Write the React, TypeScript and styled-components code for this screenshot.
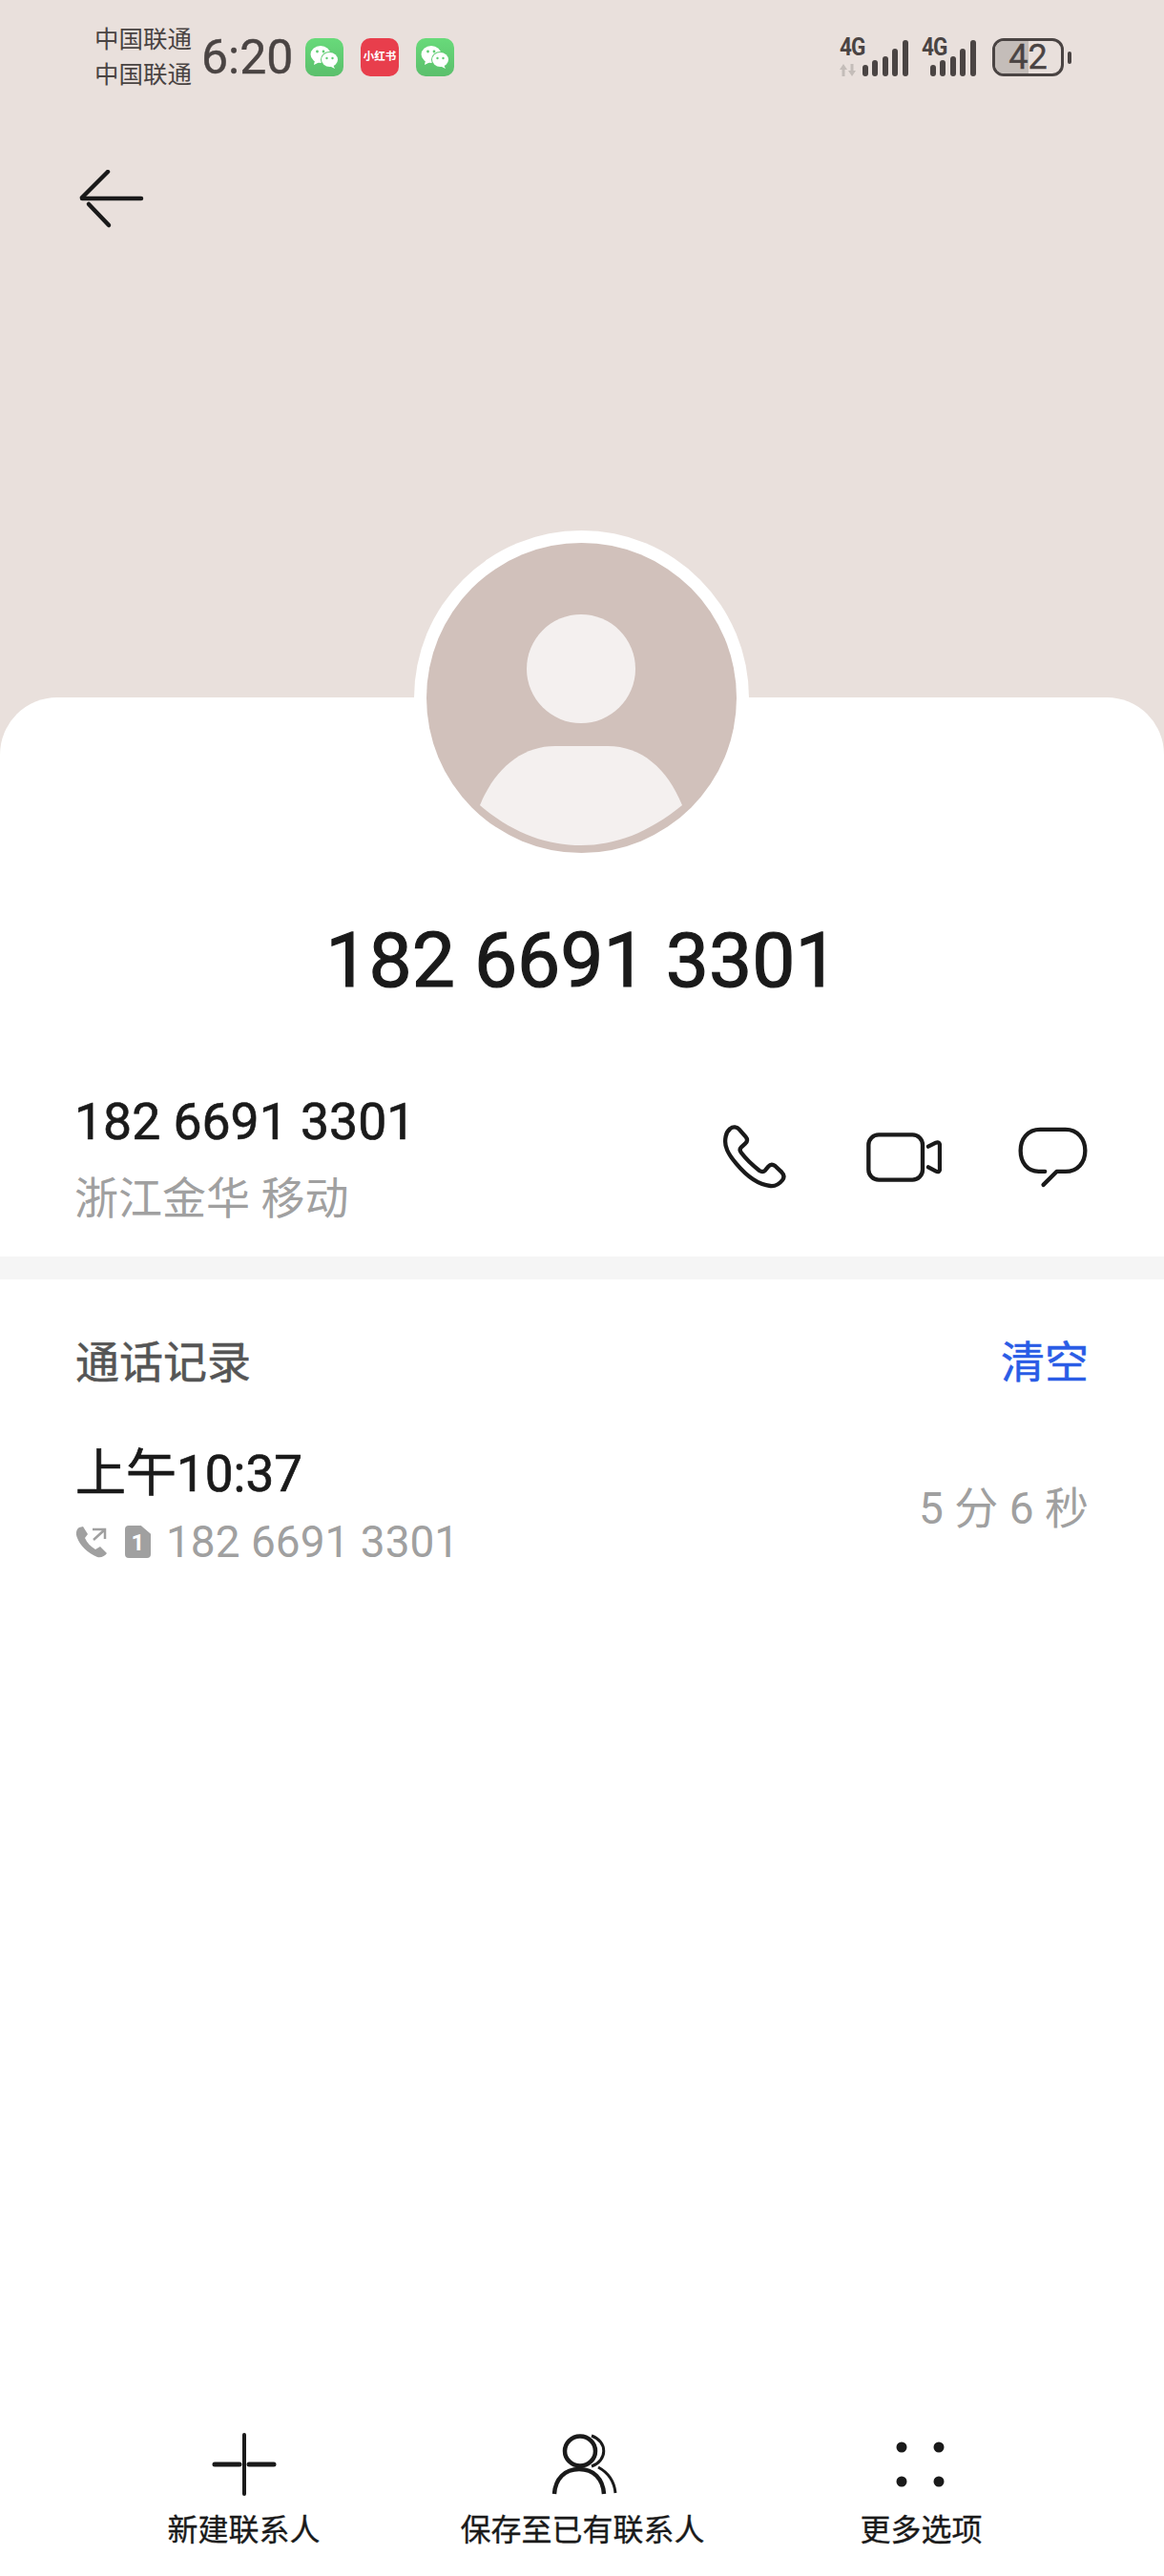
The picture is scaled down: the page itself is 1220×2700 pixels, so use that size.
import styled, { createGlobalStyle } from 'styled-components';

const GlobalStyle = createGlobalStyle`
  html, body {
    margin: 0;
    padding: 0;
    background: #ffffff;
  }
  * {
    box-sizing: border-box;
  }
`;

const fontStack = `Roboto, "Noto Sans CJK SC", sans-serif`;

const navItems = [
  { label: '新建联系人', icon: 'plus' },
  { label: '保存至已有联系人', icon: 'person' },
  { label: '更多选项', icon: 'dots' },
];

const Page = styled.div`
  width: 1220px;
  height: 2700px;
  display: flex;
  flex-direction: column;
  overflow: hidden;
  font-family: ${fontStack};
  color: #1a1a1a;
`;

const Hero = styled.div`
  height: 791px;
  flex-shrink: 0;
  background: #e9e0dc;
`;

const StatusBar = styled.div`
  display: flex;
  align-items: center;
  height: 80px;
  padding: 40px 0 0 99px;
  color: #4a4443;
`;

const Carriers = styled.div`
  display: flex;
  flex-direction: column;
  font-size: 25.5px;
  line-height: 37px;
  width: 112px;
`;

const Clock = styled.div`
  font-size: 50px;
  line-height: 60px;
  width: 109px;
  -webkit-text-stroke: 0.4px #4a4443;
`;

const AppIcons = styled.div`
  display: flex;
  gap: 18px;
`;

const AppIcon = styled.div<{ $red?: boolean }>`
  width: 40px;
  height: 40px;
  border-radius: 10px;
  display: flex;
  align-items: center;
  justify-content: center;
  background: ${(p) => (p.$red ? '#e83e4c' : 'linear-gradient(#68da7a, #5bbf6c)')};
  color: #ffffff;
  font-size: 11.5px;
  font-weight: 700;
  line-height: 1;
  white-space: nowrap;
`;

const StatusRight = styled.div`
  display: flex;
  align-items: center;
  margin-left: auto;
  padding-right: 97px;
`;

const Signal = styled.div<{ $w: number; $gap?: number }>`
  position: relative;
  width: ${(p) => p.$w}px;
  height: 40px;
  margin-left: ${(p) => p.$gap ?? 0}px;
  display: flex;
  align-items: flex-end;
  justify-content: flex-end;
  gap: 4.6px;
`;

const Bar = styled.div<{ $h: number }>`
  width: 6px;
  height: ${(p) => p.$h}px;
  border-radius: 3px;
  background: #4a4443;
`;

const NetLabel = styled.span`
  position: absolute;
  left: 0;
  top: 0;
  font-size: 25px;
  line-height: 20px;
  font-weight: 700;
  letter-spacing: -1px;
  transform: scaleX(0.9);
  transform-origin: left;
`;

const Arrows = styled.svg`
  position: absolute;
  left: 0;
  bottom: 0;
`;

const Battery = styled.div`
  position: relative;
  width: 75px;
  height: 40px;
  margin-left: 17px;
  border: 3px solid #4a4443;
  border-radius: 12px;
  display: flex;
  align-items: center;
  justify-content: center;
  overflow: hidden;
  font-size: 36px;
  line-height: 1;
`;

const BatteryFill = styled.div`
  position: absolute;
  left: 0;
  top: 0;
  bottom: 0;
  width: 50%;
  background: #c4bdb9;
`;

const BatteryText = styled.span`
  position: relative;
  -webkit-text-stroke: 0.4px #4a4443;
`;

const BatteryNub = styled.div`
  width: 4px;
  height: 13px;
  margin-left: 4px;
  border-radius: 2px;
  background: #4a4443;
`;

const BackButton = styled.div`
  margin: 98px 0 0 80px;
  width: 72px;
  height: 64px;
`;

const Card = styled.div`
  flex: 1;
  display: flex;
  flex-direction: column;
  margin-top: -60px;
  position: relative;
  background: #ffffff;
  border-radius: 60px 60px 0 0;
`;

const AvatarRing = styled.div`
  width: 351px;
  height: 351px;
  flex-shrink: 0;
  margin: -175px 0 0 434px;
  padding: 13px;
  border-radius: 50%;
  background: #ffffff;
`;

const AvatarCircle = styled.svg`
  display: block;
  width: 325px;
  height: 325px;
`;

const Title = styled.div`
  margin-top: 55px;
  font-size: 80.5px;
  line-height: 90px;
  font-weight: 400;
  -webkit-text-stroke: 1.2px #1a1a1a;
  text-align: center;
`;

const ContactRow = styled.div`
  display: flex;
  align-items: center;
  justify-content: space-between;
  margin-top: 89px;
  padding: 0 80px 26px 78px;
`;

const ContactInfo = styled.div`
  display: flex;
  flex-direction: column;
  gap: 10px;
`;

const ContactNumber = styled.div`
  font-size: 53.5px;
  line-height: 70px;
  font-weight: 400;
  -webkit-text-stroke: 0.7px #1a1a1a;
`;

const Muted = styled.div`
  font-size: 46px;
  line-height: 70px;
  color: #a0a0a0;
`;

const ContactActions = styled.div`
  display: flex;
  align-items: center;
  gap: 80px;
  margin-bottom: 6px;
`;

const Divider = styled.div`
  height: 24px;
  background: #f5f5f5;
`;

const SectionHead = styled.div`
  display: flex;
  align-items: center;
  justify-content: space-between;
  padding: 57px 79px 0;
  font-size: 46px;
  line-height: 60px;
  color: #555555;
  -webkit-text-stroke: 0.5px #555555;
`;

const ClearLink = styled.span`
  color: #2a5ce6;
  -webkit-text-stroke: 0.5px #2a5ce6;
`;

const CallRow = styled.div`
  display: flex;
  align-items: center;
  justify-content: space-between;
  padding: 55px 79px 0;
`;

const CallInfo = styled.div`
  display: flex;
  flex-direction: column;
  gap: 14px;
`;

const CallTime = styled.div`
  font-size: 53px;
  line-height: 64px;
  font-weight: 400;
  -webkit-text-stroke: 0.7px #1a1a1a;
`;

const CallMeta = styled.div`
  display: flex;
  align-items: center;
  height: 50px;
  font-size: 46px;
  color: #a0a0a0;
`;

const CallIcon = styled.svg`
  margin-right: 18px;
`;

const SimIcon = styled.div`
  width: 27px;
  height: 34px;
  margin-right: 16px;
  border-radius: 4px;
  background: #a0a0a0;
  clip-path: polygon(0 0, 62% 0, 100% 26%, 100% 100%, 0 100%);
  color: #ffffff;
  font-size: 24px;
  font-weight: 700;
  line-height: 36px;
  text-align: center;
`;

const Duration = styled.div`
  font-size: 46px;
  color: #a0a0a0;
`;

const BottomNav = styled.div`
  display: grid;
  grid-template-columns: repeat(3, 355px);
  margin-top: auto;
  padding: 0 0 26px 78px;
`;

const NavItem = styled.div`
  display: flex;
  flex-direction: column;
  align-items: center;
  gap: 12px;
`;

const NavLabel = styled.div`
  font-size: 32px;
  line-height: 44px;
  white-space: nowrap;
  -webkit-text-stroke: 0.3px #1a1a1a;
`;

const WeChatGlyph = () => (
  <svg width="30" height="26" viewBox="0 0 30 26">
    <ellipse cx="11" cy="10" rx="10.5" ry="9" fill="#fff" />
    <path d="M5 16 L4 21 L10 18 Z" fill="#fff" />
    <ellipse cx="20.5" cy="15.5" rx="9.5" ry="8.5" fill="#62cd74" />
    <ellipse cx="20.5" cy="15.5" rx="8.5" ry="7.5" fill="#fff" />
    <path d="M24 21 L26 25 L20 22 Z" fill="#fff" />
    <circle cx="7.5" cy="7" r="1.4" fill="#62cd74" />
    <circle cx="14" cy="7" r="1.4" fill="#62cd74" />
    <circle cx="17.5" cy="14" r="1.2" fill="#62cd74" />
    <circle cx="23.5" cy="14" r="1.2" fill="#62cd74" />
  </svg>
);

const SignalBars = () => (
  <>
    <Bar $h={12} />
    <Bar $h={17} />
    <Bar $h={21} />
    <Bar $h={29} />
    <Bar $h={38} />
  </>
);

const NavIcon = ({ icon }: { icon: string }) => {
  if (icon === 'plus') {
    return (
      <svg width="70" height="70" viewBox="0 0 70 70" fill="none" stroke="#1a1a1a" strokeLinecap="round">
        <path d="M35 4 V66" strokeWidth="4" />
        <path d="M4 35 H30 M40 35 H66" strokeWidth="5" />
      </svg>
    );
  }
  if (icon === 'person') {
    return (
      <svg width="85" height="70" viewBox="0 0 85 70" fill="none" stroke="#1a1a1a" strokeWidth="4.5">
        <ellipse cx="40" cy="21" rx="16" ry="15.5" />
        <path d="M13 66 C14 50 24 40 39 40 C54 40 64 50 65 66" />
        <path d="M52 5 C69 11 69 31 52 37" strokeWidth="3" />
        <path d="M59 38 C70 44 76 54 77 65" strokeWidth="3" />
      </svg>
    );
  }
  return (
    <svg width="70" height="70" viewBox="0 0 70 70" fill="#1a1a1a">
      <circle cx="14" cy="17" r="5.5" />
      <circle cx="53" cy="17" r="5.5" />
      <circle cx="14" cy="53" r="5.5" />
      <circle cx="53" cy="53" r="5.5" />
    </svg>
  );
};

export default function App() {
  return (
    <>
      <GlobalStyle />
      <Page>
        <Hero>
          <StatusBar>
            <Carriers>
              <span>中国联通</span>
              <span>中国联通</span>
            </Carriers>
            <Clock>6:20</Clock>
            <AppIcons>
              <AppIcon>
                <WeChatGlyph />
              </AppIcon>
              <AppIcon $red>小红书</AppIcon>
              <AppIcon>
                <WeChatGlyph />
              </AppIcon>
            </AppIcons>
            <StatusRight>
              <Signal $w={72}>
                <NetLabel>4G</NetLabel>
                <Arrows width="18" height="13" viewBox="0 0 18 13" fill="#c4bdb9">
                  <path d="M4 0 L8 6 H5.5 V13 H2.5 V6 H0 Z" />
                  <path d="M13 13 L9 7 H11.5 V0 H14.5 V7 H17 Z" />
                </Arrows>
                <SignalBars />
              </Signal>
              <Signal $w={57} $gap={14}>
                <NetLabel>4G</NetLabel>
                <SignalBars />
              </Signal>
              <Battery>
                <BatteryFill />
                <BatteryText>42</BatteryText>
              </Battery>
              <BatteryNub />
            </StatusRight>
          </StatusBar>
          <BackButton>
            <svg width="72" height="64" viewBox="0 0 72 64" fill="none" stroke="#1a1a1a" strokeWidth="4.5" strokeLinecap="round">
              <path d="M6 30 H68" />
              <path d="M6 29 L33 2" />
              <path d="M13 36 L34 58" />
            </svg>
          </BackButton>
        </Hero>
        <Card>
          <AvatarRing>
            <AvatarCircle viewBox="0 0 325 325">
              <circle cx="162.5" cy="162.5" r="162.5" fill="#d1c1bb" />
              <circle cx="162" cy="132" r="57" fill="#f4f0ef" />
              <path
                d="M56 275 C72 236 100 213 135 213 H190 C225 213 252 236 268 275 C232 304 198 317 162 317 C126 317 90 304 56 275 Z"
                fill="#f4f0ef"
              />
            </AvatarCircle>
          </AvatarRing>
          <Title>182 6691 3301</Title>
          <ContactRow>
            <ContactInfo>
              <ContactNumber>182 6691 3301</ContactNumber>
              <Muted>浙江金华 移动</Muted>
            </ContactInfo>
            <ContactActions>
              <svg width="70" height="70" viewBox="75 85 210 210" fill="none" stroke="#1a1a1a" strokeWidth="13" strokeLinejoin="round" style={{ marginRight: 2 }}>
                <path d="M106 100 C115 92 128 95 134 102 L155 126 C161 133 160 141 154 146 L141 158 C136 163 136 170 141 176 C155 195 180 218 198 232 C204 236 211 236 216 231 L226 219 C232 212 240 212 247 217 L268 237 C276 245 276 254 270 262 C262 272 248 282 232 280 C190 276 150 240 125 210 C100 180 85 155 92 125 C94 113 100 105 106 100 Z" />
              </svg>
              <svg width="80" height="54" viewBox="530 108 240 162" fill="none" stroke="#1a1a1a" strokeWidth="13" strokeLinejoin="round">
                <rect x="540" y="118" width="170" height="142" rx="32" />
                <path d="M728 155 L752 143 C760 140 764 145 764 152 V225 C764 232 760 237 752 233 L728 220" strokeLinecap="round" />
              </svg>
              <svg width="73" height="64" viewBox="1010 97 220 192" fill="none" stroke="#1a1a1a" strokeWidth="13" strokeLinecap="round" strokeLinejoin="round">
                <path d="M1095 238 H1075 C1040 238 1018 210 1018 172 C1018 135 1040 105 1080 105 H1160 C1198 105 1222 135 1222 172 C1222 210 1198 238 1160 238 H1132 L1090 280" />
              </svg>
            </ContactActions>
          </ContactRow>
          <Divider />
          <SectionHead>
            <span>通话记录</span>
            <ClearLink>清空</ClearLink>
          </SectionHead>
          <CallRow>
            <CallInfo>
              <CallTime>上午10:37</CallTime>
              <CallMeta>
                <CallIcon width="34" height="34" viewBox="0 0 34 34" fill="none">
                  <path d="M4 2 C1 4 0 8 2 13 C5 21 13 29 23 33 C27 34 31 32 33 29 L26 22 L21 25 C16 22 12 18 10 13 L13 9 L8 1 Z" fill="#a0a0a0" />
                  <path d="M18 4 H31 V14 M30 5 L19 15" stroke="#a0a0a0" strokeWidth="2.5" />
                </CallIcon>
                <SimIcon>1</SimIcon>
                <span>182 6691 3301</span>
              </CallMeta>
            </CallInfo>
            <Duration>5 分 6 秒</Duration>
          </CallRow>
          <BottomNav>
            {navItems.map((item) => (
              <NavItem key={item.label}>
                <NavIcon icon={item.icon} />
                <NavLabel>{item.label}</NavLabel>
              </NavItem>
            ))}
          </BottomNav>
        </Card>
      </Page>
    </>
  );
}
